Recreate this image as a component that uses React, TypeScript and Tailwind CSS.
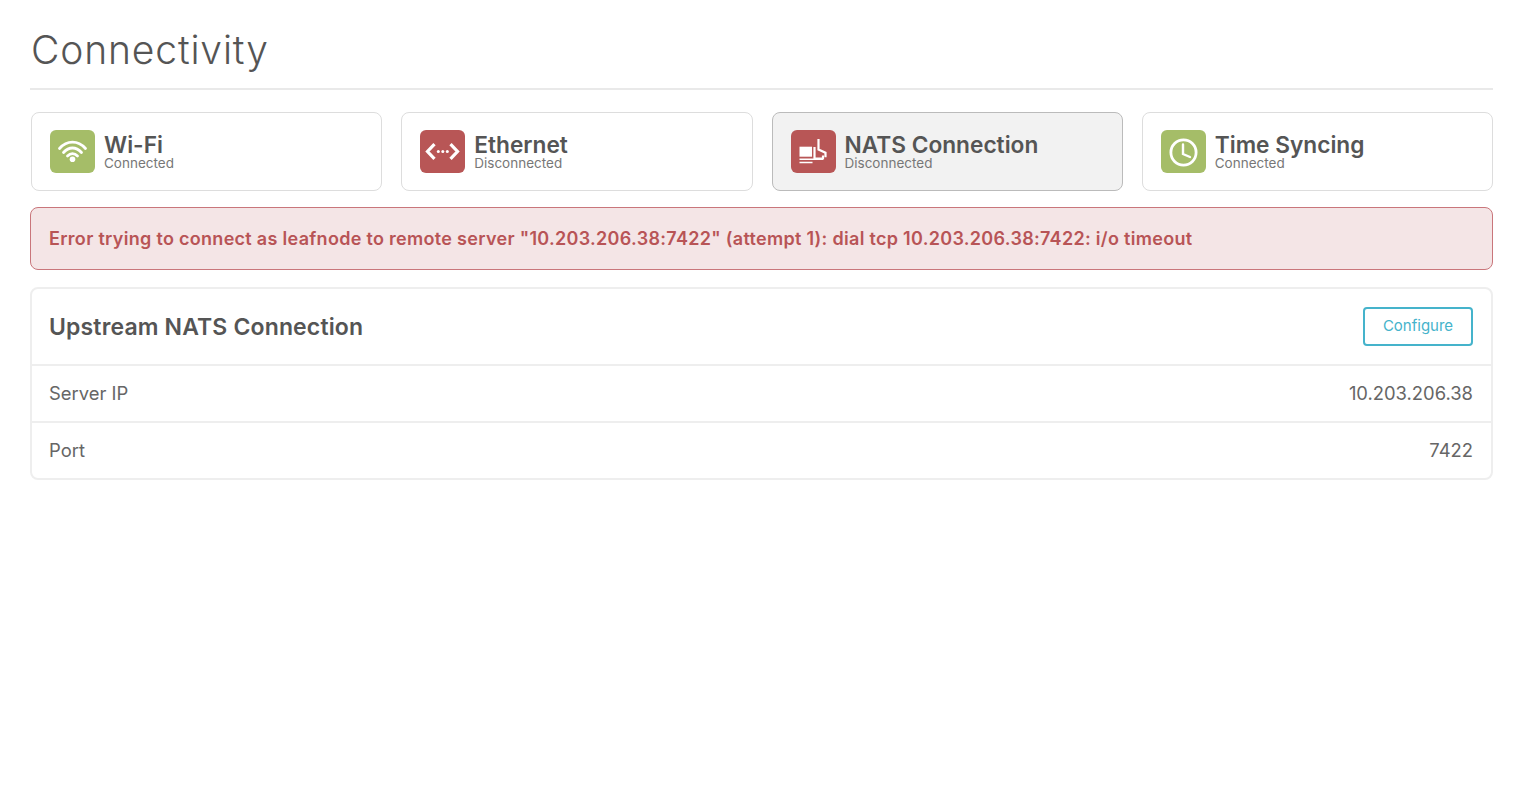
const cards = [
  { name: 'Wi-Fi', status: 'Connected', ok: true, icon: 'wifi' },
  { name: 'Ethernet', status: 'Disconnected', ok: false, icon: 'ethernet' },
  { name: 'NATS Connection', status: 'Disconnected', ok: false, icon: 'nats', active: true },
  { name: 'Time Syncing', status: 'Connected', ok: true, icon: 'clock' },
];

// all four drawn on the tile's own 45x43 grid
function CardIcon({ icon }: { icon: string }) {
  if (icon === 'wifi') {
    return (
      <svg viewBox="0 0 45 43" className="h-[43px] w-[45px]" fill="none" stroke="white" strokeWidth="2.8" strokeLinecap="round">
        <path d="M9.5 18.5C17 10 28 10 35.5 18.5" />
        <path d="M13.5 22.5C19 16.5 26 16.5 31.5 22.5" />
        <path d="M17.5 26C20.5 23 24.5 23 27.5 26" />
        <circle cx="22.5" cy="29.3" r="2.8" fill="white" stroke="none" />
      </svg>
    );
  }
  if (icon === 'clock') {
    return (
      <svg viewBox="0 0 45 43" className="h-[43px] w-[45px]" fill="none" stroke="white" strokeWidth="2.8">
        <circle cx="22.5" cy="22.5" r="12.6" />
        <path d="M22 14.5v9.5l7 3" strokeLinecap="round" strokeWidth="2.4" />
      </svg>
    );
  }
  if (icon === 'ethernet') {
    return (
      <svg viewBox="0 0 45 43" className="h-[43px] w-[45px]" fill="none" stroke="white" strokeWidth="3.2">
        <path d="M14.5 14.2 7.5 21.5 14.5 28.8M30.5 14.2 37.5 21.5 30.5 28.8" />
        <circle cx="18.3" cy="21.5" r="1.5" fill="white" stroke="none" />
        <circle cx="22.8" cy="21.5" r="1.5" fill="white" stroke="none" />
        <circle cx="27.3" cy="21.5" r="1.5" fill="white" stroke="none" />
      </svg>
    );
  }
  return (
    <svg viewBox="0 0 45 43" className="h-[43px] w-[45px]" fill="none" stroke="white" strokeWidth="2.2">
      <rect x="8.5" y="16.7" width="12.5" height="10" fill="white" stroke="none" />
      <path d="M8.5 29.3h23.5M8.5 32.5h13" strokeWidth="1.6" />
      <path d="M27.5 9v10.5l7 3.2v4.5" />
      <path d="M23.5 17v11.5h8.5v-3" />
    </svg>
  );
}

export default function App() {
  return (
    <div className="min-h-[807px] bg-white pr-[32px] pl-[30px] pt-[26px] font-['Inter',sans-serif] text-[#555]">
      <h1 className="border-b-2 border-[#e9e9e9] pb-[15px] pl-[1px] text-[39px] leading-[47px] font-light tracking-[0.85px]">Connectivity</h1>

      <div className="mt-[22px] ml-[1px] grid grid-cols-4 gap-[19px]">
        {cards.map((card) => (
          <div
            key={card.name}
            className={
              card.active
                ? 'flex h-[79px] items-center gap-[9px] rounded-lg border border-[#bbb] bg-[#f2f2f2] px-[18px]'
                : 'flex h-[79px] items-center gap-[9px] rounded-lg border border-[#ddd] bg-white px-[18px]'
            }
          >
            <div className={card.ok ? 'h-[43px] w-[45px] shrink-0 rounded-md bg-[#a5bd68]' : 'h-[43px] w-[45px] shrink-0 rounded-md bg-[#b85656]'}>
              <CardIcon icon={card.icon} />
            </div>
            <div className="-mt-[2px]">
              <div className="text-[22.7px] leading-[24px] font-semibold">{card.name}</div>
              <div className="text-[13.5px] leading-[12px] text-[#777]">{card.status}</div>
            </div>
          </div>
        ))}
      </div>

      <div className="mt-4 flex h-[63px] items-center rounded-lg border border-[#c9767b] bg-[#f4e5e6] px-[18px] text-[18px] tracking-[0.3px] font-semibold text-[#b85456]">
        Error trying to connect as leafnode to remote server "10.203.206.38:7422" (attempt 1): dial tcp 10.203.206.38:7422: i/o timeout
      </div>

      <div className="mt-[17px] rounded-lg border-2 border-[#eee]">
        <div className="flex h-[77px] items-center justify-between border-b-2 border-[#eee] pr-[18px] pl-[17px]">
          <div className="pt-px text-[23px] tracking-[0.15px] font-semibold">Upstream NATS Connection</div>
          <button type="button" className="h-[39px] w-[110px] rounded border-2 border-[#45b3cb] text-[15px] text-[#45b3cb]">Configure</button>
        </div>
        <div className="flex h-[57px] items-center justify-between border-b-2 border-[#eee] pr-[18px] pl-[17px] text-[18.4px] text-[#666]">
          <span>Server IP</span>
          <span>10.203.206.38</span>
        </div>
        <div className="flex h-[55px] items-center justify-between pr-[18px] pl-[17px] text-[18.4px] text-[#666]">
          <span>Port</span>
          <span>7422</span>
        </div>
      </div>
    </div>
  );
}
